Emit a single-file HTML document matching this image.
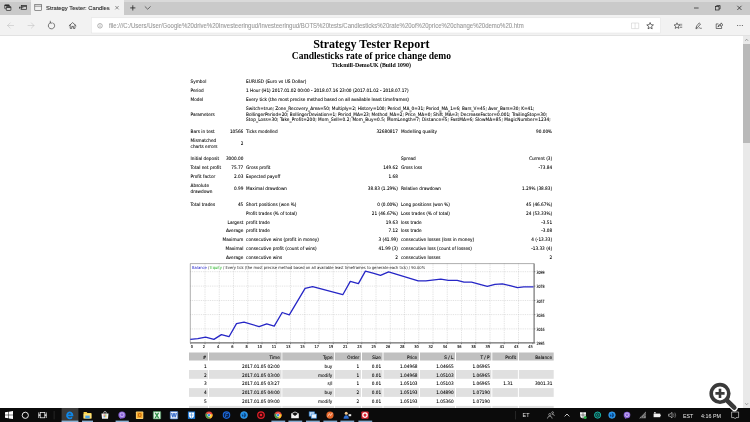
<!DOCTYPE html>
<html lang="en">
<head>
<meta charset="utf-8">
<title>Strategy Tester: Candlesticks rate of price change demo</title>
<style>
html,body{margin:0;padding:0;}
body{width:750px;height:422px;overflow:hidden;background:#fff;position:relative;font-family:"Liberation Sans",sans-serif;}
#root{will-change:transform;position:absolute;left:0;top:0;width:750px;height:422px;overflow:hidden;background:#fff;}
.abs{position:absolute;}
.t{font-family:"DejaVu Sans Condensed","DejaVu Sans","Liberation Sans",sans-serif;position:absolute;white-space:pre;font-size:4.69px;line-height:6.0px;height:6.0px;color:#000;-webkit-text-stroke:0.07px #000;}
.ui{position:absolute;white-space:pre;font-size:4.75px;line-height:6px;height:6px;color:#222;-webkit-text-stroke:0.08px currentColor;}
.serif{font-family:"Liberation Serif",serif;font-weight:bold;color:#000;position:absolute;white-space:pre;text-align:center;left:0;width:742.7px;}
.hc{position:absolute;background:#c0c0c0;}
.gr{position:absolute;background:#e0e0e0;}
.chart{position:absolute;left:0;top:0;}
svg{position:absolute;overflow:visible;}
</style>
</head>
<body>
<div id="root">

<!-- ===== browser chrome ===== -->
<div class="abs" style="left:0;top:0;width:750px;height:14.9px;background:#cacaca"></div>
<div class="abs" style="left:0;top:0;width:750px;height:1.8px;background:#dadada"></div>
<div class="abs" style="left:30.5px;top:0;width:93.5px;height:14.9px;background:#f2f2f2"></div>
<div class="abs" style="left:0;top:14.7px;width:750px;height:21px;background:#f2f2f2"></div>
<div class="abs" style="left:0;top:35.4px;width:750px;height:0.5px;background:#e2e2e2"></div>
<svg class="chart" width="750" height="422" viewBox="0 0 750 422">
 <!-- tab bar left icons -->
 <g fill="none" stroke="#2b2b2b" stroke-width="0.7">
  <rect x="4.7" y="4.7" width="4.6" height="4" rx="0.5" fill="#cdcdcd"/>
  <path d="M4.7 5.5 H9.3" stroke-width="1"/>
  <rect x="6.3" y="6.5" width="4.6" height="4" rx="0.5" fill="#cdcdcd"/>
  <path d="M6.3 7.3 H10.9" stroke-width="1.1"/>
  <rect x="21.6" y="5.4" width="4.8" height="4.2"/>
  <path d="M21.6 6.2 H26.4" stroke-width="1"/>
  <path d="M19 7.7 H23.4 M20.4 6.4 L19 7.7 L20.4 9" stroke-width="0.7"/>
  <!-- tab page icon -->
  <rect x="34.8" y="4.7" width="6.9" height="5.8" stroke="#444" stroke-width="0.55"/>
  <path d="M34.8 6.2 H41.7" stroke="#444" stroke-width="0.55"/>
  <!-- tab close -->
  <path d="M115.3 6 L118.7 9.4 M118.7 6 L115.3 9.4" stroke="#333" stroke-width="0.5"/>
  <!-- new tab + -->
  <path d="M130.2 7.9 H135.4 M132.8 5.3 V10.5" stroke="#222" stroke-width="0.8"/>
  <!-- chevron -->
  <path d="M144.8 6.4 L147.7 9.2 L150.6 6.4" stroke="#333" stroke-width="0.65"/>
  <!-- window controls -->
  <path d="M694 8 H698.6" stroke="#333" stroke-width="0.8"/>
  <rect x="715.6" y="6.6" width="3.4" height="3.4" stroke="#222" stroke-width="0.7"/>
  <path d="M716.7 6.6 V5.5 H720.1 V8.9 H719" stroke="#222" stroke-width="0.7"/>
  <path d="M737.3 5.8 L741.5 10 M741.5 5.8 L737.3 10" stroke="#222" stroke-width="0.75"/>
 </g>
 <!-- nav buttons -->
 <g fill="none" stroke-width="0.6" stroke-linecap="round" stroke-linejoin="round">
  <path d="M7.6 25.5 H13.6 M10.2 22.9 L7.6 25.5 L10.2 28.1" stroke="#c2c2c2"/>
  <path d="M28 25.5 H34 M31.4 22.9 L34 25.5 L31.4 28.1" stroke="#c2c2c2"/>
  <path d="M53.3 23 A3.2 3.2 0 1 1 50.2 22.7" stroke="#333" stroke-width="0.65"/>
  <path d="M50.3 21.2 V23.1 H52.1" stroke="#333" stroke-width="0.6"/>
  <path d="M69.2 25.7 L72.6 22.6 L76 25.7 M70.2 25 V28.4 H71.8 V26.4 H73.4 V28.4 H75 V25" stroke="#2a2a2a" stroke-width="0.65"/>
 </g>
 <!-- address box -->
 <rect x="91.4" y="17.8" width="569" height="15.2" fill="#fff" stroke="#e1e1e1" stroke-width="0.5"/>
 <circle cx="100" cy="25.8" r="2.3" fill="none" stroke="#777" stroke-width="0.55"/>
 <path d="M100 25.2 V27.1 M100 24.2 V24.7" stroke="#777" stroke-width="0.55"/>
 <!-- reading view (light) -->
 <g fill="none" stroke="#c6c6c6" stroke-width="0.5">
  <path d="M631.5 23 H635.1 V28.6 H631.5 Z M635.1 23 H638.7 V28.6 H635.1"/>
 </g>
 <!-- star -->
 <path d="M650.10 22.50 L651.04 24.71 L653.43 24.92 L651.62 26.49 L652.16 28.83 L650.10 27.60 L648.04 28.83 L648.58 26.49 L646.77 24.92 L649.16 24.71 Z" fill="none" stroke="#222" stroke-width="0.65" stroke-linejoin="round"/>
 <!-- favorites hub -->
 <g fill="none" stroke="#222" stroke-width="0.6" stroke-linejoin="round">
  <path d="M677.00 22.80 L677.82 24.77 L679.95 24.94 L678.33 26.33 L678.82 28.41 L677.00 27.30 L675.18 28.41 L675.67 26.33 L674.05 24.94 L676.18 24.77 Z"/>
  <path d="M679.3 24.3 H682.2 M679.9 25.9 H682.2 M679.7 27.5 H682.2" stroke="#555"/>
  <!-- pen -->
  <path d="M696 28.2 L696.6 26 L699.2 22.9 L700.5 24 L697.9 27.2 Z M695.6 28.6 H697.4 M698.6 28.2 Q699.6 27.4 700.3 28.2 T701.8 28.1" />
  <!-- share -->
  <path d="M718.4 23.9 H716.2 V28.5 H721.6 V26.9"/>
  <path d="M717.9 27 Q718.2 24.3 721 24.2 V22.9 L723 24.8 L721 26.7 V25.5 Q719 25.4 717.9 27 Z"/>
 </g>
 <g fill="#333"><circle cx="737.7" cy="25.6" r="0.5"/><circle cx="740" cy="25.6" r="0.5"/><circle cx="742.3" cy="25.6" r="0.5"/></g>
</svg>
<div class="ui" style="left:46px;top:5.1px;font-size:5.83px;color:#1c1c1c">Strategy Tester: Candles</div>
<div class="ui" style="left:109px;top:22.8px;font-size:6.3px;line-height:6.4px;transform-origin:0 50%;transform:scaleX(0.951);color:#979797">file:///C:/Users/User/Google%20drive%20Investeeringud/Investeeringud/BOTS%20tests/Candlesticks%20rate%20of%20price%20change%20demo%20.htm</div>


<!-- ===== page ===== -->
<div class="serif" style="top:36.55px;font-size:12px;line-height:15px">Strategy Tester Report</div>
<div class="serif" style="top:51.2px;font-size:9.5px;line-height:11px">Candlesticks rate of price change demo</div>
<div class="serif" style="top:61.9px;font-size:5.9px;line-height:7px">Tickmill-DemoUK (Build 1090)</div>

<div class="t" style="left:190.60px;top:79.10px">Symbol</div>
<div class="t" style="left:246.10px;top:79.10px;letter-spacing:0.06px">EURUSD (Euro vs US Dollar)</div>
<div class="t" style="left:190.60px;top:87.90px">Period</div>
<div class="t" style="left:246.10px;top:87.90px">1 Hour (H1) 2017.01.02 00:00 - 2018.07.16 23:00 (2017.01.02 - 2018.07.17)</div>
<div class="t" style="left:190.60px;top:96.70px">Model</div>
<div class="t" style="left:246.10px;top:96.70px">Every tick (the most precise method based on all available least timeframes)</div>
<div class="t" style="left:190.60px;top:111.60px">Parameters</div>
<div class="t" style="left:246.10px;top:106.00px;letter-spacing:0.026px">Switch=true; Zone_Recovery_Area=50; Multiply=2; History=100; Period_MA_0=31; Period_MA_1=6; Bars_V=45; Aver_Bars=30; K=41;</div>
<div class="t" style="left:246.10px;top:111.60px;letter-spacing:0.014px">BollingerPeriod=20; BollingerDeviation=1; Period_MA=23; Method_MA=2; Price_MA=0; Shift_MA=3; DecreaseFactor=0.001; TrailingStop=30;</div>
<div class="t" style="left:246.10px;top:117.30px;letter-spacing:0.088px">Stop_Loss=30; Take_Profit=200; Mom_Sell=0.2; Mom_Buy=0.5; MomLength=7; Distance=5; FastMA=6; SlowMA=85; MagicNumber=1234;</div>
<div class="t" style="left:190.60px;top:129.20px">Bars in test</div>
<div class="t" style="right:506.70px;top:129.20px">10566</div>
<div class="t" style="left:246.10px;top:129.20px">Ticks modelled</div>
<div class="t" style="right:352.10px;top:129.20px">32680817</div>
<div class="t" style="left:400.90px;top:129.20px">Modelling quality</div>
<div class="t" style="right:197.90px;top:129.20px">90.00%</div>
<div class="t" style="left:190.60px;top:138.20px">Mismatched</div>
<div class="t" style="left:190.60px;top:144.00px">charts errors</div>
<div class="t" style="right:506.70px;top:141.10px">2</div>
<div class="t" style="left:190.60px;top:156.10px">Initial deposit</div>
<div class="t" style="right:506.70px;top:156.10px">3000.00</div>
<div class="t" style="left:400.90px;top:156.10px">Spread</div>
<div class="t" style="right:197.90px;top:156.10px">Current (3)</div>
<div class="t" style="left:190.60px;top:165.00px">Total net profit</div>
<div class="t" style="right:506.70px;top:165.00px">75.77</div>
<div class="t" style="left:246.10px;top:165.00px">Gross profit</div>
<div class="t" style="right:352.10px;top:165.00px">149.62</div>
<div class="t" style="left:400.90px;top:165.00px">Gross loss</div>
<div class="t" style="right:197.90px;top:165.00px">-73.84</div>
<div class="t" style="left:190.60px;top:174.10px">Profit factor</div>
<div class="t" style="right:506.70px;top:174.10px">2.03</div>
<div class="t" style="left:246.10px;top:174.10px">Expected payoff</div>
<div class="t" style="right:352.10px;top:174.10px">1.68</div>
<div class="t" style="left:190.60px;top:183.20px">Absolute</div>
<div class="t" style="left:190.60px;top:189.00px">drawdown</div>
<div class="t" style="right:506.70px;top:186.10px">0.99</div>
<div class="t" style="left:246.10px;top:186.10px">Maximal drawdown</div>
<div class="t" style="right:352.10px;top:186.10px">38.83 (1.29%)</div>
<div class="t" style="left:400.90px;top:186.10px">Relative drawdown</div>
<div class="t" style="right:197.90px;top:186.10px">1.29% (38.83)</div>
<div class="t" style="left:190.60px;top:202.00px">Total trades</div>
<div class="t" style="right:506.70px;top:202.00px">45</div>
<div class="t" style="left:246.10px;top:202.00px">Short positions (won %)</div>
<div class="t" style="right:352.10px;top:202.00px">0 (0.00%)</div>
<div class="t" style="left:400.90px;top:202.00px">Long positions (won %)</div>
<div class="t" style="right:197.90px;top:202.00px">45 (46.67%)</div>
<div class="t" style="left:246.10px;top:210.80px">Profit trades (% of total)</div>
<div class="t" style="right:352.10px;top:210.80px">21 (46.67%)</div>
<div class="t" style="left:400.90px;top:210.80px">Loss trades (% of total)</div>
<div class="t" style="right:197.90px;top:210.80px">24 (53.33%)</div>
<div class="t" style="right:506.70px;top:219.70px">Largest</div>
<div class="t" style="left:246.10px;top:219.70px">profit trade</div>
<div class="t" style="right:352.10px;top:219.70px">19.63</div>
<div class="t" style="left:400.90px;top:219.70px">loss trade</div>
<div class="t" style="right:197.90px;top:219.70px">-3.51</div>
<div class="t" style="right:506.70px;top:228.30px">Average</div>
<div class="t" style="left:246.10px;top:228.30px">profit trade</div>
<div class="t" style="right:352.10px;top:228.30px">7.12</div>
<div class="t" style="left:400.90px;top:228.30px">loss trade</div>
<div class="t" style="right:197.90px;top:228.30px">-3.08</div>
<div class="t" style="right:506.70px;top:237.30px">Maximum</div>
<div class="t" style="left:246.10px;top:237.30px">consecutive wins (profit in money)</div>
<div class="t" style="right:352.10px;top:237.30px">3 (41.99)</div>
<div class="t" style="left:400.90px;top:237.30px">consecutive losses (loss in money)</div>
<div class="t" style="right:197.90px;top:237.30px">4 (-13.33)</div>
<div class="t" style="right:506.70px;top:246.10px">Maximal</div>
<div class="t" style="left:246.10px;top:246.10px">consecutive profit (count of wins)</div>
<div class="t" style="right:352.10px;top:246.10px">41.99 (3)</div>
<div class="t" style="left:400.90px;top:246.10px">consecutive loss (count of losses)</div>
<div class="t" style="right:197.90px;top:246.10px">-13.33 (4)</div>
<div class="t" style="right:506.70px;top:255.10px">Average</div>
<div class="t" style="left:246.10px;top:255.10px">consecutive wins</div>
<div class="t" style="right:352.10px;top:255.10px">2</div>
<div class="t" style="left:400.90px;top:255.10px">consecutive losses</div>
<div class="t" style="right:197.90px;top:255.10px">2</div>

<svg class="chart" width="750" height="422" viewBox="0 0 750 422">
<path d="M205.00 263.6 V342.9 M219.25 263.6 V342.9 M233.50 263.6 V342.9 M247.75 263.6 V342.9 M262.00 263.6 V342.9 M276.25 263.6 V342.9 M290.50 263.6 V342.9 M304.75 263.6 V342.9 M319.00 263.6 V342.9 M333.25 263.6 V342.9 M347.50 263.6 V342.9 M361.75 263.6 V342.9 M376.00 263.6 V342.9 M390.25 263.6 V342.9 M404.50 263.6 V342.9 M418.75 263.6 V342.9 M433.00 263.6 V342.9 M447.25 263.6 V342.9 M461.50 263.6 V342.9 M475.75 263.6 V342.9 M490.00 263.6 V342.9 M504.25 263.6 V342.9 M518.50 263.6 V342.9 M190.3 271.7 H533.9 M190.3 286.1 H533.9 M190.3 300.5 H533.9 M190.3 314.6 H533.9 M190.3 328.9 H533.9" stroke="#b8b8b8" stroke-width="0.45" stroke-dasharray="0.9 0.9" fill="none"/>
<path d="M190.3 342.9 V263.6 H533.9" fill="none" stroke="#6a6a6a" stroke-width="0.55"/>
<path d="M534.1 263.6 V342.9 H190.3" fill="none" stroke="#6e6e6e" stroke-width="1.15"/>
<path d="M533.9 271.7 h1.5 M533.9 286.1 h1.5 M533.9 300.5 h1.5 M533.9 314.6 h1.5 M533.9 328.9 h1.5 M533.9 342.9 h1.5 M190.75 342.9 v1.3 M205.00 342.9 v1.3 M219.25 342.9 v1.3 M233.50 342.9 v1.3 M247.75 342.9 v1.3 M262.00 342.9 v1.3 M276.25 342.9 v1.3 M290.50 342.9 v1.3 M304.75 342.9 v1.3 M319.00 342.9 v1.3 M333.25 342.9 v1.3 M347.50 342.9 v1.3 M361.75 342.9 v1.3 M376.00 342.9 v1.3 M390.25 342.9 v1.3 M404.50 342.9 v1.3 M418.75 342.9 v1.3 M433.00 342.9 v1.3 M447.25 342.9 v1.3 M461.50 342.9 v1.3 M475.75 342.9 v1.3 M490.00 342.9 v1.3 M504.25 342.9 v1.3 M518.50 342.9 v1.3 M532.75 342.9 v1.3" stroke="#4a4a4a" stroke-width="0.55" fill="none"/>
<polyline fill="none" stroke="#2626c6" stroke-width="1.3" stroke-linejoin="round" points="190.3,339.4 197.8,338.6 205.6,337.2 213.9,339.4 221.4,334.6 229,336.7 236.5,323.6 244,322.1 259.1,326.6 266.7,323.8 274.2,326.1 282.2,312.5 289.3,314.8 305.1,288.4 312.6,286.7 342.8,294.7 350.3,281.4 358.4,283.6 365.4,271.1 373,273.1 380.5,275.4 388.6,271.8 418.2,280.9 425.8,280.9 440.8,279.1 448.4,280.4 457.2,280.4 464,282.1 471.5,282.1 487.3,286.4 494.9,284.4 502.4,283.9 510,285.7 517.5,287.7 523.8,286.9 533.5,286.9"/>
<g font-family="DejaVu Sans Condensed, DejaVu Sans, Liberation Sans, sans-serif" font-size="3.9" fill="#111" stroke="#111" stroke-width="0.12">
<text x="190.8" y="348.2">0</text>
<text x="205.00" y="348.2" text-anchor="end">2</text>
<text x="219.25" y="348.2" text-anchor="end">4</text>
<text x="233.50" y="348.2" text-anchor="end">6</text>
<text x="247.75" y="348.2" text-anchor="end">8</text>
<text x="262.00" y="348.2" text-anchor="end">10</text>
<text x="276.25" y="348.2" text-anchor="end">11</text>
<text x="290.50" y="348.2" text-anchor="end">13</text>
<text x="304.75" y="348.2" text-anchor="end">15</text>
<text x="319.00" y="348.2" text-anchor="end">17</text>
<text x="333.25" y="348.2" text-anchor="end">19</text>
<text x="347.50" y="348.2" text-anchor="end">21</text>
<text x="361.75" y="348.2" text-anchor="end">23</text>
<text x="376.00" y="348.2" text-anchor="end">25</text>
<text x="390.25" y="348.2" text-anchor="end">26</text>
<text x="404.50" y="348.2" text-anchor="end">28</text>
<text x="418.75" y="348.2" text-anchor="end">30</text>
<text x="433.00" y="348.2" text-anchor="end">32</text>
<text x="447.25" y="348.2" text-anchor="end">34</text>
<text x="461.50" y="348.2" text-anchor="end">36</text>
<text x="475.75" y="348.2" text-anchor="end">38</text>
<text x="490.00" y="348.2" text-anchor="end">39</text>
<text x="504.25" y="348.2" text-anchor="end">41</text>
<text x="518.50" y="348.2" text-anchor="end">43</text>
<text x="532.75" y="348.2" text-anchor="end">45</text>
<text x="536.4" y="273.90" font-size="4.4" textLength="8.2" lengthAdjust="spacingAndGlyphs">3099</text>
<text x="536.4" y="288.30" font-size="4.4" textLength="8.2" lengthAdjust="spacingAndGlyphs">3078</text>
<text x="536.4" y="302.70" font-size="4.4" textLength="8.2" lengthAdjust="spacingAndGlyphs">3057</text>
<text x="536.4" y="316.80" font-size="4.4" textLength="8.2" lengthAdjust="spacingAndGlyphs">3036</text>
<text x="536.4" y="331.10" font-size="4.4" textLength="8.2" lengthAdjust="spacingAndGlyphs">3016</text>
<text x="536.4" y="345.20" font-size="4.4" textLength="8.2" lengthAdjust="spacingAndGlyphs">2995</text>
<text x="192.1" y="268.9" font-size="4.08" stroke-width="0" fill="#222"><tspan fill="#2222cc" stroke="#2222cc">Balance</tspan> / <tspan fill="#22b022" stroke="#22b022">Equity</tspan> / Every tick (the most precise method based on all available least timeframes to generate each tick) / 90.00%</text>
</g></svg>

<svg class="chart" width="750" height="422" viewBox="0 0 750 422">
<rect x="189.0" y="352.5" width="19.00" height="8.00" fill="#c0c0c0"/>
<rect x="209.0" y="352.5" width="72.50" height="8.00" fill="#c0c0c0"/>
<rect x="282.3" y="352.5" width="51.90" height="8.00" fill="#c0c0c0"/>
<rect x="335.0" y="352.5" width="26.00" height="8.00" fill="#c0c0c0"/>
<rect x="362.0" y="352.5" width="20.50" height="8.00" fill="#c0c0c0"/>
<rect x="383.5" y="352.5" width="35.40" height="8.00" fill="#c0c0c0"/>
<rect x="419.9" y="352.5" width="35.10" height="8.00" fill="#c0c0c0"/>
<rect x="456.0" y="352.5" width="35.30" height="8.00" fill="#c0c0c0"/>
<rect x="492.3" y="352.5" width="25.60" height="8.00" fill="#c0c0c0"/>
<rect x="518.9" y="352.5" width="34.80" height="8.00" fill="#c0c0c0"/>
<rect x="189.0" y="370.0" width="19.00" height="8.80" fill="#e0e0e0"/>
<rect x="209.0" y="370.0" width="72.50" height="8.80" fill="#e0e0e0"/>
<rect x="282.3" y="370.0" width="51.90" height="8.80" fill="#e0e0e0"/>
<rect x="335.0" y="370.0" width="26.00" height="8.80" fill="#e0e0e0"/>
<rect x="362.0" y="370.0" width="20.50" height="8.80" fill="#e0e0e0"/>
<rect x="383.5" y="370.0" width="35.40" height="8.80" fill="#e0e0e0"/>
<rect x="419.9" y="370.0" width="35.10" height="8.80" fill="#e0e0e0"/>
<rect x="456.0" y="370.0" width="35.30" height="8.80" fill="#e0e0e0"/>
<rect x="492.3" y="370.0" width="25.60" height="8.80" fill="#e0e0e0"/>
<rect x="518.9" y="370.0" width="34.80" height="8.80" fill="#e0e0e0"/>
<rect x="189.0" y="388.1" width="19.00" height="8.80" fill="#e0e0e0"/>
<rect x="209.0" y="388.1" width="72.50" height="8.80" fill="#e0e0e0"/>
<rect x="282.3" y="388.1" width="51.90" height="8.80" fill="#e0e0e0"/>
<rect x="335.0" y="388.1" width="26.00" height="8.80" fill="#e0e0e0"/>
<rect x="362.0" y="388.1" width="20.50" height="8.80" fill="#e0e0e0"/>
<rect x="383.5" y="388.1" width="35.40" height="8.80" fill="#e0e0e0"/>
<rect x="419.9" y="388.1" width="35.10" height="8.80" fill="#e0e0e0"/>
<rect x="456.0" y="388.1" width="35.30" height="8.80" fill="#e0e0e0"/>
<rect x="492.3" y="388.1" width="25.60" height="8.80" fill="#e0e0e0"/>
<rect x="518.9" y="388.1" width="34.80" height="8.80" fill="#e0e0e0"/>
<rect x="189.0" y="405.9" width="19.00" height="2.60" fill="#e0e0e0"/>
<rect x="209.0" y="405.9" width="72.50" height="2.60" fill="#e0e0e0"/>
<rect x="282.3" y="405.9" width="51.90" height="2.60" fill="#e0e0e0"/>
<rect x="335.0" y="405.9" width="26.00" height="2.60" fill="#e0e0e0"/>
<rect x="362.0" y="405.9" width="20.50" height="2.60" fill="#e0e0e0"/>
<rect x="383.5" y="405.9" width="35.40" height="2.60" fill="#e0e0e0"/>
<rect x="419.9" y="405.9" width="35.10" height="2.60" fill="#e0e0e0"/>
<rect x="456.0" y="405.9" width="35.30" height="2.60" fill="#e0e0e0"/>
<rect x="492.3" y="405.9" width="25.60" height="2.60" fill="#e0e0e0"/>
<rect x="518.9" y="405.9" width="34.80" height="2.60" fill="#e0e0e0"/>
</svg>
<div class="t" style="right:543.70px;top:354.70px">#</div>
<div class="t" style="right:470.20px;top:354.70px">Time</div>
<div class="t" style="right:417.50px;top:354.70px">Type</div>
<div class="t" style="right:390.70px;top:354.70px">Order</div>
<div class="t" style="right:369.20px;top:354.70px">Size</div>
<div class="t" style="right:332.80px;top:354.70px">Price</div>
<div class="t" style="right:296.70px;top:354.70px">S / L</div>
<div class="t" style="right:260.40px;top:354.70px">T / P</div>
<div class="t" style="right:233.80px;top:354.70px">Profit</div>
<div class="t" style="right:198.00px;top:354.70px">Balance</div>
<div class="t" style="right:543.40px;top:363.70px">1</div>
<div class="t" style="right:470.40px;top:363.70px">2017.01.05 02:00</div>
<div class="t" style="right:417.70px;top:363.70px">buy</div>
<div class="t" style="right:390.90px;top:363.70px">1</div>
<div class="t" style="right:368.90px;top:363.70px">0.01</div>
<div class="t" style="right:332.50px;top:363.70px">1.04968</div>
<div class="t" style="right:296.40px;top:363.70px">1.04665</div>
<div class="t" style="right:260.10px;top:363.70px">1.06965</div>
<div class="t" style="right:543.40px;top:372.50px">2</div>
<div class="t" style="right:470.40px;top:372.50px">2017.01.05 03:00</div>
<div class="t" style="right:417.70px;top:372.50px">modify</div>
<div class="t" style="right:390.90px;top:372.50px">1</div>
<div class="t" style="right:368.90px;top:372.50px">0.01</div>
<div class="t" style="right:332.50px;top:372.50px">1.04968</div>
<div class="t" style="right:296.40px;top:372.50px">1.05103</div>
<div class="t" style="right:260.10px;top:372.50px">1.06965</div>
<div class="t" style="right:543.40px;top:381.30px">3</div>
<div class="t" style="right:470.40px;top:381.30px">2017.01.05 03:27</div>
<div class="t" style="right:417.70px;top:381.30px">s/l</div>
<div class="t" style="right:390.90px;top:381.30px">1</div>
<div class="t" style="right:368.90px;top:381.30px">0.01</div>
<div class="t" style="right:332.50px;top:381.30px">1.05103</div>
<div class="t" style="right:296.40px;top:381.30px">1.05103</div>
<div class="t" style="right:260.10px;top:381.30px">1.06965</div>
<div class="t" style="right:237.40px;top:381.30px">1.31</div>
<div class="t" style="right:197.70px;top:381.30px">3001.31</div>
<div class="t" style="right:543.40px;top:390.20px">4</div>
<div class="t" style="right:470.40px;top:390.20px">2017.01.05 04:00</div>
<div class="t" style="right:417.70px;top:390.20px">buy</div>
<div class="t" style="right:390.90px;top:390.20px">2</div>
<div class="t" style="right:368.90px;top:390.20px">0.01</div>
<div class="t" style="right:332.50px;top:390.20px">1.05193</div>
<div class="t" style="right:296.40px;top:390.20px">1.04890</div>
<div class="t" style="right:260.10px;top:390.20px">1.07190</div>
<div class="t" style="right:543.40px;top:399.10px">5</div>
<div class="t" style="right:470.40px;top:399.10px">2017.01.05 09:00</div>
<div class="t" style="right:417.70px;top:399.10px">modify</div>
<div class="t" style="right:390.90px;top:399.10px">2</div>
<div class="t" style="right:368.90px;top:399.10px">0.01</div>
<div class="t" style="right:332.50px;top:399.10px">1.05193</div>
<div class="t" style="right:296.40px;top:399.10px">1.05360</div>
<div class="t" style="right:260.10px;top:399.10px">1.07190</div>

<!-- scrollbar -->
<div class="abs" style="left:742.7px;top:35.9px;width:7.3px;height:372.1px;background:#e9e9e9"></div>
<div class="abs" style="left:742.7px;top:43.7px;width:7.3px;height:99px;background:#b9b9b9"></div>
<svg style="left:742.7px;top:35.9px" width="7.3" height="7.8" viewBox="0 0 7.3 7.8"><path d="M2.2 4.8 L3.65 3.2 L5.1 4.8" fill="none" stroke="#666" stroke-width="0.55"/></svg>
<svg style="left:742.7px;top:400.2px" width="7.3" height="7.8" viewBox="0 0 7.3 7.8"><path d="M2.2 3.2 L3.65 4.8 L5.1 3.2" fill="none" stroke="#666" stroke-width="0.55"/></svg>

<!-- ===== taskbar ===== -->
<div class="abs" style="left:0;top:408px;width:750px;height:14px;background:#0b0b0b"></div>
<svg class="chart" width="750" height="422" viewBox="0 0 750 422">
<rect x="61.6" y="408" width="16.8" height="14" fill="#3a3a3a"/>
<rect x="61.6" y="420.6" width="16.8" height="1.4" fill="#8fb6d8"/>
<rect x="82" y="420.6" width="11.0" height="1.4" fill="#8fb6d8"/>
<rect x="115.6" y="420.6" width="13.2" height="1.4" fill="#8fb6d8"/>
<rect x="271.4" y="420.6" width="13.8" height="1.4" fill="#86acd0"/>
<rect x="288.4" y="420.6" width="13.8" height="1.4" fill="#86acd0"/>
<rect x="306.0" y="420.6" width="13.8" height="1.4" fill="#86acd0"/>
<rect x="323.4" y="420.6" width="13.8" height="1.4" fill="#86acd0"/>
<rect x="340.4" y="420.6" width="13.8" height="1.4" fill="#86acd0"/>
<rect x="358.4" y="420.6" width="13.8" height="1.4" fill="#86acd0"/>
<g fill="#fff"><path d="M5 412.3 L8.4 411.8 V414.8 H5 Z M8.9 411.7 L13 411.1 V414.8 H8.9 Z M5 415.3 H8.4 V418.3 L5 417.8 Z M8.9 415.3 H13 V419 L8.9 418.4 Z"/></g>
<circle cx="25.3" cy="415.3" r="3.1" fill="none" stroke="#fff" stroke-width="0.9"/>
<g fill="none" stroke="#fff" stroke-width="0.7"><rect x="40.2" y="412.6" width="4.6" height="5.2"/><path d="M38.7 412.4 V418 M46.3 412.4 V418" /><path d="M38.7 415.2 h1.5 M44.8 415.2 h1.5" stroke-width="1.2"/></g>
<rect x="53.7" y="411" width="0.8" height="8.4" fill="#2c2c2c"/>
<path d="M72 417.2 A2.75 3.0 0 1 1 72.5 415.3 H67.8" fill="none" stroke="#0f88ea" stroke-width="1.7"/>
<path d="M83.6 412 H86.6 L87.4 413 H91.4 V418.4 H83.6 Z" fill="#f7d04a"/><rect x="83.6" y="413.8" width="7.8" height="4.6" fill="#fbe07a"/><rect x="85.3" y="415.6" width="4.4" height="2.8" fill="#4aa3e8"/>
<path d="M101.5 413.4 H108.5 L108 418.8 H102 Z" fill="#f4f4f4"/><path d="M103.6 413.4 Q103.6 411.4 105 411.4 Q106.4 411.4 106.4 413.4" fill="none" stroke="#f4f4f4" stroke-width="0.6"/><rect x="103.6" y="414.5" width="1.2" height="1.2" fill="#e84a3a"/><rect x="105.2" y="414.5" width="1.2" height="1.2" fill="#6ab04a"/><rect x="103.6" y="416.1" width="1.2" height="1.2" fill="#3a8ee8"/><rect x="105.2" y="416.1" width="1.2" height="1.2" fill="#f4c020"/>
<circle cx="122" cy="415.0" r="3.6" fill="#8a63d6"/><circle cx="122" cy="414.8" r="1.98" fill="none" stroke="#e9e0fb" stroke-width="0.6"/><path d="M120.4 417.40000000000003 l-0.6 1.7 l2 -1.2 z" fill="#8a63d6"/>
<rect x="135.9" y="411.5" width="7.4" height="7.4" rx="0.7" fill="#fbd77a"/><rect x="136.7" y="412.3" width="5.8" height="5.8" fill="#f3a62a"/>
<text x="139.6" y="417.2" font-family="Liberation Sans, sans-serif" font-weight="bold" font-size="5" text-anchor="middle" fill="#b85a08">O</text>
<rect x="153.3" y="411.5" width="7.4" height="7.4" rx="0.5" fill="#e4f1e6" stroke="#4a9a5c" stroke-width="0.7"/>
<text x="157" y="417.6" font-family="Liberation Sans, sans-serif" font-weight="bold" font-size="6.4" text-anchor="middle" fill="#1f8a3a" stroke="#1f8a3a" stroke-width="0.3">X</text>
<rect x="170.3" y="411.5" width="7.4" height="7.4" rx="0.5" fill="#e6eefb" stroke="#4a80d0" stroke-width="0.7"/>
<text x="174" y="417.4" font-family="Liberation Sans, sans-serif" font-weight="bold" font-size="5.8" text-anchor="middle" fill="#2a62c8" stroke="#2a62c8" stroke-width="0.25">W</text>
<rect x="187.9" y="411.5" width="7.2" height="7.4" fill="#1f7ad8"/><path d="M188.9 412.4 H194.1 V415.6 Q194.1 417.6 191.5 418.5 Q188.9 417.6 188.9 415.6 Z" fill="#fff"/><path d="M191.5 412.7 V418.2 M189.3 415 H193.7" stroke="#1f7ad8" stroke-width="0.5"/>
<circle cx="209" cy="415.1" r="3.6" fill="#e9453a"/>
<path d="M209 415.1 L205.88 413.30 A3.6 3.6 0 0 0 209.93 418.58 Z" fill="#3fa34d"/>
<path d="M209 415.1 L209.93 418.58 A3.6 3.6 0 0 0 212.38 413.88 Z" fill="#f8c62a"/>
<circle cx="209" cy="415.1" r="1.66" fill="#fff"/><circle cx="209" cy="415.1" r="1.22" fill="#3b82e6"/>
<circle cx="226.5" cy="415.1" r="3.2" fill="#08204a" stroke="#1a66d8" stroke-width="1.15"/><text x="226.6" y="417" font-family="Liberation Sans, sans-serif" font-style="italic" font-weight="bold" font-size="5" text-anchor="middle" fill="#2a78e8">F</text>
<circle cx="244" cy="415.1" r="3.5" fill="#1a8ae6"/><path d="M243.8 412.70000000000005 q2.2 0.6 2.2 2.6 q-0.2 1.6 -1.6 2.2 q-0.8 -1 -0.2 -2 q0.4 -1.4 -0.4 -2.8 z" fill="#0b3f7a"/><path d="M241.8 414.5 q1.2 -0.4 1.6 0.6 q0.2 1.2 -0.4 1.8 q-1.2 -0.6 -1.2 -2.4 z" fill="#0b3f7a"/><circle cx="244" cy="415.1" r="3.5" fill="none" stroke="#5ab4f4" stroke-width="0.5"/>
<circle cx="261" cy="415.1" r="3.3" fill="#3a0508" stroke="#e0202a" stroke-width="1.2"/><circle cx="261" cy="415.1" r="1.25" fill="#e8222c"/>
<circle cx="278" cy="415.1" r="3.6" fill="#e9453a"/>
<path d="M278 415.1 L274.88 413.30 A3.6 3.6 0 0 0 278.93 418.58 Z" fill="#3fa34d"/>
<path d="M278 415.1 L278.93 418.58 A3.6 3.6 0 0 0 281.38 413.88 Z" fill="#f8c62a"/>
<circle cx="278" cy="415.1" r="1.66" fill="#fff"/><circle cx="278" cy="415.1" r="1.22" fill="#3b82e6"/>
<path d="M291.2 413.6 L295 411.4 L298.8 413.6 V418.2 H291.2 Z" fill="#f4f4f4"/><path d="M292.2 413.7 L295 412.3 L297.8 413.7 L295 415.9 Z" fill="#111"/>
<rect x="309.2" y="411.9" width="5.2" height="4.2" fill="#cfe2f6" stroke="#3a8ee0" stroke-width="0.7"/><rect x="311.2" y="414" width="5.2" height="4.2" fill="#e8f1fb" stroke="#3a8ee0" stroke-width="0.7"/>
<circle cx="330" cy="415.1" r="3.6" fill="#e8672a"/><path d="M327.6 416.6 L329.4 413.6 L330.6 415.6 L332.4 412.8" fill="none" stroke="#fde3d0" stroke-width="0.7"/>
<circle cx="346.2" cy="413.3" r="1.5" fill="#f0c890"/><path d="M343.6 418.8 Q343.8 415.2 346.2 415.2 Q348.6 415.2 348.8 418.8 Z" fill="#2f6fd0"/><rect x="348.6" y="414.2" width="2.6" height="2" fill="#e8e8e8"/>
<rect x="361.4" y="411.5" width="7.2" height="7.2" rx="0.8" fill="#e02430"/><circle cx="365" cy="415.1" r="2.15" fill="none" stroke="#fff" stroke-width="1.25"/>
<rect x="515.1" y="411" width="0.8" height="8.4" fill="#2c2c2c"/>
<g fill="none" stroke="#bdbdbd" stroke-width="0.65"><circle cx="549.8" cy="414.6" r="1.1"/><path d="M547.4 418.6 Q547.6 416.2 549.8 416.2 Q552 416.2 552.2 418.6"/><circle cx="552.6" cy="412.6" r="0.9"/><path d="M552 414.2 Q554.2 414 554.4 416"/></g>
<path d="M564.6 416.4 L567 414 L569.4 416.4" fill="none" stroke="#e4e4e4" stroke-width="0.85"/>
<path d="M580 412.2 H586 V415.4 Q586 417.6 583 418.6 Q580 417.6 580 415.4 Z" fill="#f2f2f2"/><path d="M583 412.2 V418.6 M580 415 H586" stroke="#0b0b0b" stroke-width="0.45"/><circle cx="585.2" cy="417.4" r="1.5" fill="#2db24a"/>
<circle cx="597.6" cy="415.1" r="3.1" fill="#0b3d3a" stroke="#19b5a5" stroke-width="1"/><circle cx="597.6" cy="415.1" r="1.3" fill="none" stroke="#19b5a5" stroke-width="0.6"/>
<circle cx="612" cy="415.1" r="3.3" fill="#1a8ae6"/><path d="M611.8 412.70000000000005 q2.2 0.6 2.2 2.6 q-0.2 1.6 -1.6 2.2 q-0.8 -1 -0.2 -2 q0.4 -1.4 -0.4 -2.8 z" fill="#0b3f7a"/><path d="M609.8 414.5 q1.2 -0.4 1.6 0.6 q0.2 1.2 -0.4 1.8 q-1.2 -0.6 -1.2 -2.4 z" fill="#0b3f7a"/><circle cx="612" cy="415.1" r="3.3" fill="none" stroke="#5ab4f4" stroke-width="0.5"/>
<circle cx="627" cy="415.0" r="3.3" fill="#8a63d6"/><circle cx="627" cy="414.8" r="1.81" fill="none" stroke="#e9e0fb" stroke-width="0.6"/><path d="M625.4 417.40000000000003 l-0.6 1.7 l2 -1.2 z" fill="#8a63d6"/>
<path d="M639.6 418.2 L645.8 418.2 L645.8 412 Z" fill="#8a8a8a"/><path d="M639.6 418.2 L645.8 412" stroke="#ddd" stroke-width="0.5"/><path d="M641.2 418.2 A4.6 4.6 0 0 1 645.8 413.8 M642.8 418.2 A3 3 0 0 1 645.8 415.4" fill="none" stroke="#0b0b0b" stroke-width="0.4"/>
<rect x="653.6" y="413.6" width="6.6" height="3.6" fill="#f0f0f0"/><rect x="660.2" y="414.6" width="0.7" height="1.6" fill="#f0f0f0"/><path d="M654.2 413.6 v-1.6 h1.4 v1.6" fill="#f0f0f0"/>
<path d="M668.6 414.2 H670 L672 412.4 V418 L670 416.2 H668.6 Z" fill="none" stroke="#eee" stroke-width="0.55"/><path d="M673.4 413.6 Q674.6 415.2 673.4 416.8 M674.8 412.6 Q676.6 415.2 674.8 417.8" fill="none" stroke="#bbb" stroke-width="0.5"/>
<path d="M731.6 412 H738.6 V417.6 H736 L735.1 418.8 L734.2 417.6 H731.6 Z" fill="none" stroke="#eee" stroke-width="0.6"/>
</svg>
<div class="ui" style="left:522.6px;top:411.5px;font-size:5.3px;color:#e8e8e8;-webkit-text-stroke:0">ET</div>
<div class="ui" style="left:683px;top:412.5px;font-size:5.3px;color:#e8e8e8;-webkit-text-stroke:0">EST</div>
<div class="ui" style="left:701.1px;top:412.5px;font-size:5.35px;color:#e8e8e8;-webkit-text-stroke:0">4:16 PM</div>

<!-- magnifier overlay -->
<svg class="chart" width="750" height="422" viewBox="0 0 750 422">
<path d="M727.2 400.6 L734.5 407.9" stroke="#fff" stroke-width="6.6" stroke-linecap="round"/>
<circle cx="720" cy="393.4" r="10.2" fill="#fff"/>
<path d="M727.4 400.8 L734.3 407.7" stroke="#3a3a3a" stroke-width="4.6" stroke-linecap="round"/>
<circle cx="720" cy="393.4" r="8.8" fill="#fff" stroke="#3a3a3a" stroke-width="3.6"/>
<path d="M715.4 393.4 H724.6 M720 388.8 V398" stroke="#3a3a3a" stroke-width="2.6"/>
</svg>
</div>
</body>
</html>
